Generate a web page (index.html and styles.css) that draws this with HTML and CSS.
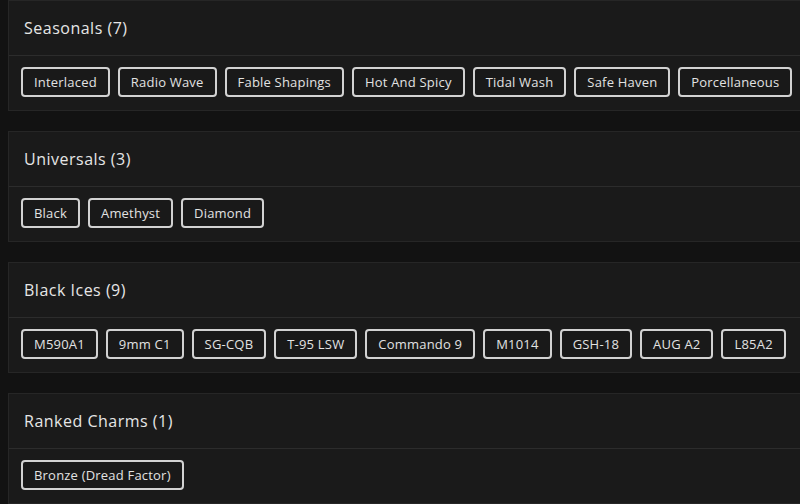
FILE: index.html
```html
<!DOCTYPE html>
<html lang="en">
<head>
<meta charset="utf-8">
<title>Charms</title>
<link rel="stylesheet" href="styles.css">
</head>
<body>
<main class="page">
  <section class="card">
    <h2 class="card-head">Seasonals (7)</h2>
    <div class="chips">
      <span class="chip">Interlaced</span>
      <span class="chip">Radio Wave</span>
      <span class="chip">Fable Shapings</span>
      <span class="chip">Hot And Spicy</span>
      <span class="chip">Tidal Wash</span>
      <span class="chip">Safe Haven</span>
      <span class="chip">Porcellaneous</span>
    </div>
  </section>
  <section class="card">
    <h2 class="card-head">Universals (3)</h2>
    <div class="chips">
      <span class="chip">Black</span>
      <span class="chip">Amethyst</span>
      <span class="chip">Diamond</span>
    </div>
  </section>
  <section class="card">
    <h2 class="card-head">Black Ices (9)</h2>
    <div class="chips">
      <span class="chip">M590A1</span>
      <span class="chip">9mm C1</span>
      <span class="chip">SG-CQB</span>
      <span class="chip">T-95 LSW</span>
      <span class="chip">Commando 9</span>
      <span class="chip">M1014</span>
      <span class="chip">GSH-18</span>
      <span class="chip">AUG A2</span>
      <span class="chip">L85A2</span>
    </div>
  </section>
  <section class="card">
    <h2 class="card-head">Ranked Charms (1)</h2>
    <div class="chips">
      <span class="chip">Bronze (Dread Factor)</span>
    </div>
  </section>
</main>
</body>
</html>
```

FILE: styles.css
```css
html, body {
  margin: 0;
  padding: 0;
  background: #121212;
  overflow: hidden;
}
body {
  font-family: "Open Sans", "DejaVu Sans", sans-serif;
  color: #e4e4e4;
}
.page {
  display: flex;
  flex-direction: column;
  gap: 20px;
  padding: 0 0 0 8px;
  margin-right: -40px;
}
.card {
  background: #1a1a1a;
  border: 1px solid #262626;
}
.card-head {
  margin: 0;
  height: 54px;
  display: flex;
  align-items: center;
  padding: 0 15px;
  font-size: 16px;
  font-weight: 500;
  letter-spacing: 0.5px;
  color: #e6e6e6;
  border-bottom: 1px solid #2c2c2c;
}
.chips {
  display: flex;
  flex-wrap: wrap;
  gap: 8px;
  padding: 11px 12px 13px;
}
.chip {
  display: inline-flex;
  align-items: center;
  height: 30px;
  box-sizing: border-box;
  padding: 0 11px;
  border: 2px solid #d2d2d2;
  border-radius: 4px;
  background: #191919;
  font-size: 13px;
  letter-spacing: 0.2px;
  color: #e2e2e2;
  white-space: nowrap;
}
```
